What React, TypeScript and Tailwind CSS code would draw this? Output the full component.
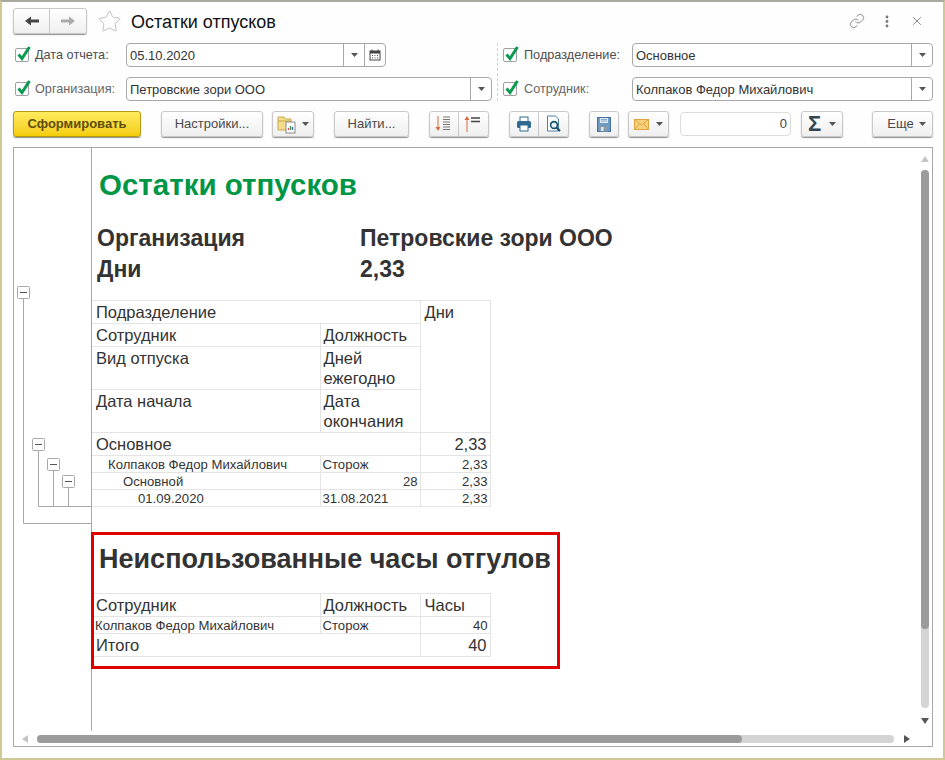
import { Link, Star, X } from "lucide-react";
import type { ReactNode } from "react";

const btn =
  "flex h-[26px] items-center justify-center rounded-[3px] border border-[#c9c9c9] bg-gradient-to-b from-white to-[#efefef] text-[13px] text-[#4a4a4a] shadow-[0_1px_1px_#8f8f8f]";
const field = "flex h-[24px] items-center rounded-[4px] border border-[#a8a8a8] bg-white text-[13px] text-[#333]";
const cell = "border border-[#e4e4e4]";
const big = "text-[16.5px] leading-[20px] pr-[3px]";
const bigTop = "text-[16.5px] leading-[20px] pr-[3px] pt-[1px] align-top";
const small = "text-[13.15px] leading-[14px] pr-[2px] pt-[1px]";

function Caret({ color = "#555" }: { color?: string }) {
  return (
    <svg width="7" height="4" viewBox="0 0 7 4">
      <path d="M0 0h7L3.5 4z" fill={color} />
    </svg>
  );
}

function Check() {
  return (
    <span className="relative block h-[14px] w-[14px] shrink-0 rounded-[2px] border border-[#a0a0a0] bg-white">
      <svg className="absolute left-[0px] top-[-4px]" width="16" height="17" viewBox="0 0 16 17">
        <path d="M2.5 9.5 L6 13.5 L13.5 2" fill="none" stroke="#0a9a50" strokeWidth="3" />
      </svg>
    </span>
  );
}

function DropBtn() {
  return (
    <span className="flex h-full w-[21px] items-center justify-center border-l border-[#a8a8a8]">
      <Caret />
    </span>
  );
}

function CheckLabel({ text, color = "#4d4d4d", gap = "gap-[6px]" }: { text: string; color?: string; gap?: string }) {
  return (
    <div className={`flex items-center ${gap}`} style={{ color }}>
      <Check />
      <span className="pt-[1px] text-[12.7px]">{text}</span>
    </div>
  );
}

function FieldText({ children }: { children: ReactNode }) {
  return <span className="flex-1 pt-[1px]">{children}</span>;
}

function Arrow({ left, color }: { left: boolean; color: string }) {
  return (
    <svg width="14" height="10" viewBox="0 0 14 10" style={{ transform: left ? undefined : "scaleX(-1)" }}>
      <path d="M0 5 L6 0.5 V3.5 H14 V6.5 H6 V9.5 Z" fill={color} />
    </svg>
  );
}

function Calendar() {
  return (
    <svg width="12" height="12" viewBox="0 0 12 12">
      <rect x="1" y="2" width="10" height="9" fill="none" stroke="#444" />
      <rect x="1" y="2" width="10" height="2.5" fill="#444" />
      <path d="M3 0.5v2M9 0.5v2" stroke="#444" />
      <path d="M3 6.5h1M5.5 6.5h1M8 6.5h1M3 8.8h1M5.5 8.8h1M8 8.8h1" stroke="#555" />
    </svg>
  );
}

function FolderIcon() {
  return (
    <svg width="20" height="20" viewBox="0 0 20 20">
      <path d="M1 3h6l1.5 2H14v11H1z" fill="#f4dc8e" stroke="#c9a94f" />
      <path d="M1 7h13" stroke="#c9a94f" />
      <rect x="9" y="8" width="9" height="11" fill="#fff" stroke="#8a8a8a" />
      <path d="M11.5 16v-2" stroke="#d9534f" strokeWidth="1.4" />
      <path d="M13.5 16v-4" stroke="#3a9a5a" strokeWidth="1.4" />
      <path d="M15.5 16v-3" stroke="#3b73b0" strokeWidth="1.4" />
    </svg>
  );
}

function SortIcon({ down }: { down: boolean }) {
  return (
    <svg width="20" height="20" viewBox="0 0 20 20">
      {down ? (
        <>
          <path d="M4 2v12" stroke="#d9693f" />
          <path d="M1.5 13h5L4 17z" fill="#d9693f" />
          <path d="M9 3h8M9 5.5h8M9 8h8M9 10.5h8M9 13h8M9 15.5h8" stroke="#777" strokeDasharray="7 1" />
        </>
      ) : (
        <>
          <path d="M3 6v12" stroke="#d9693f" />
          <path d="M0.5 6h5L3 2z" fill="#d9693f" />
          <path d="M7 4h9M7 7.5h9" stroke="#444" strokeWidth="1.3" />
        </>
      )}
    </svg>
  );
}

function PrintIcon() {
  return (
    <svg width="16" height="16" viewBox="0 0 16 16">
      <rect x="4" y="1" width="8" height="5" fill="#fff" stroke="#2f6b8f" />
      <rect x="1" y="5" width="14" height="7" rx="1.5" fill="#2f6b8f" />
      <rect x="4" y="9" width="8" height="6" fill="#fff" stroke="#2f6b8f" />
    </svg>
  );
}

function PreviewIcon() {
  return (
    <svg width="16" height="18" viewBox="0 0 16 18">
      <path d="M1.5 1h8l3 3v12h-11z" fill="#fff" stroke="#4f7f9f" />
      <circle cx="8" cy="10" r="3.4" fill="#e8f2f8" stroke="#14506f" strokeWidth="1.6" />
      <path d="M10.5 12.5L14 16" stroke="#14506f" strokeWidth="2.2" />
    </svg>
  );
}

function SaveIcon() {
  return (
    <svg width="14" height="15" viewBox="0 0 14 15">
      <rect x="0.5" y="0.5" width="13" height="14" fill="#6e9bc6" stroke="#44709c" />
      <rect x="3" y="1" width="8" height="5" fill="#dfe9f2" />
      <path d="M4 2.5h6M4 4h6" stroke="#8aa9c6" />
      <rect x="3" y="9" width="8" height="5.5" fill="#8a9aa8" />
      <rect x="4" y="10" width="2.5" height="4" fill="#dfe9f2" />
    </svg>
  );
}

function MailIcon() {
  return (
    <svg width="15" height="11" viewBox="0 0 15 11">
      <rect x="0.5" y="0.5" width="14" height="10" fill="#f6d27e" stroke="#e3a33d" />
      <path d="M0.5 0.5L7.5 6 14.5 0.5M0.5 10.5L5.5 4.5M14.5 10.5L9.5 4.5" fill="none" stroke="#e3a33d" />
    </svg>
  );
}

function MenuDots() {
  return (
    <svg width="4" height="13" viewBox="0 0 4 13">
      <circle cx="2" cy="2" r="1.4" fill="#777" />
      <circle cx="2" cy="6.5" r="1.4" fill="#777" />
      <circle cx="2" cy="11" r="1.4" fill="#777" />
    </svg>
  );
}

function TreeBox({ x, y }: { x: number; y: number }) {
  return (
    <g>
      <rect x={x + 0.5} y={y + 0.5} width="12" height="12" rx="1" fill="#fff" stroke="#a8a8a8" />
      <path d={`M${x + 3} ${y + 6.5}h7`} stroke="#555" />
    </g>
  );
}

// линии группировки слева от отчёта
function TreeGutter() {
  return (
    <svg className="absolute left-0 top-0" width="77" height="400" viewBox="0 0 77 400">
      <path
        d="M9.5 150V375.5H77M24.5 300V358.5H77M39.5 320V358.5M54.5 335V358.5"
        fill="none"
        stroke="#a8a8a8"
      />
      <TreeBox x={3} y={138} />
      <TreeBox x={18} y={290} />
      <TreeBox x={33} y={310} />
      <TreeBox x={48} y={327} />
    </svg>
  );
}

function Toolbar() {
  return (
    <div className="mt-[10px] flex h-[26px] items-center">
      <button className="flex h-[26px] w-[128px] items-center justify-center rounded-[3px] border border-[#b59a14] bg-gradient-to-b from-[#ffec5c] to-[#f5cd00] text-[13px] font-bold text-[#5f4e0a] shadow-[0_1px_1px_#8f8f8f]">
        Сформировать
      </button>
      <button className={`${btn} ml-[20px] w-[102px]`}>Настройки...</button>
      <button className={`${btn} ml-[9px] w-[42px] gap-[5px]`}>
        <FolderIcon />
        <Caret />
      </button>
      <button className={`${btn} ml-[20px] w-[75px]`}>Найти...</button>
      <div className={`${btn} ml-[20px] w-[60px]`}>
        <span className="flex h-full w-[30px] items-center justify-center border-r border-[#c9c9c9]">
          <SortIcon down />
        </span>
        <span className="flex h-full w-[30px] items-center justify-center">
          <SortIcon down={false} />
        </span>
      </div>
      <div className={`${btn} ml-[20px] w-[60px]`}>
        <span className="flex h-full w-[30px] items-center justify-center border-r border-[#c9c9c9]">
          <PrintIcon />
        </span>
        <span className="flex h-full w-[30px] items-center justify-center">
          <PreviewIcon />
        </span>
      </div>
      <button className={`${btn} ml-[20px] w-[30px]`}>
        <SaveIcon />
      </button>
      <button className={`${btn} ml-[9px] w-[41px] gap-[7px]`}>
        <MailIcon />
        <Caret />
      </button>
      <div className="ml-[11px] flex h-[24px] w-[111px] items-center justify-end rounded-[4px] border border-[#dcdcdc] bg-white pr-[3px] text-[13px] text-[#444]">
        0
      </div>
      <button className={`${btn} ml-[10px] w-[42px] gap-[8px]`}>
        <span className="text-[22px] font-bold leading-none text-[#34454f]">Σ</span>
        <Caret />
      </button>
      <button className={`${btn} ml-auto w-[61px] gap-[5px] pl-[8px]`}>
        Еще
        <Caret />
      </button>
    </div>
  );
}

function Row({ h, children }: { h: string; children: ReactNode }) {
  return <tr className={h}>{children}</tr>;
}

function Scrollbars() {
  return (
    <>
      <svg className="absolute left-[907px] top-[8px]" width="8" height="6" viewBox="0 0 8 6">
        <path d="M0 6h8L4 0z" fill="#c4c4c4" />
      </svg>
      <div className="absolute left-[907px] top-[22px] h-[538px] w-[8px] rounded-full bg-[#d4d4d4]">
        <div className="h-[459px] w-full rounded-full bg-[#9b9b9b]" />
      </div>
      <svg className="absolute left-[907px] top-[570px]" width="8" height="6" viewBox="0 0 8 6">
        <path d="M0 0h8L4 6z" fill="#555" />
      </svg>
      <svg className="absolute left-[8px] top-[587px]" width="6" height="8" viewBox="0 0 6 8">
        <path d="M6 0v8L0 4z" fill="#c4c4c4" />
      </svg>
      <div className="absolute left-[23px] top-[587px] h-[8px] w-[857px] rounded-full bg-[#d4d4d4]">
        <div className="h-full w-[705px] rounded-full bg-[#9b9b9b]" />
      </div>
      <svg className="absolute left-[890px] top-[587px]" width="6" height="8" viewBox="0 0 6 8">
        <path d="M0 0v8l6-4z" fill="#555" />
      </svg>
    </>
  );
}

function Report() {
  return (
    <div className="relative mt-[10px] flex h-[600px] overflow-hidden border border-[#a8a8a8] bg-white text-[#333]">
      <div className="relative h-[583px] w-[78px] shrink-0 border-r border-[#a8a8a8]">
        <TreeGutter />
      </div>
      <div className="flex-1">
        <div className="ml-[7px] mt-[19px] h-[36px] text-[29.5px] font-bold leading-[36px] text-[#009646]">
          Остатки отпусков
        </div>
        <div className="ml-[5px] mt-[20px] grid grid-cols-[263px_1fr] text-[23px] font-bold leading-[31px]">
          <div>Организация</div>
          <div>Петровские зори ООО</div>
          <div>Дни</div>
          <div>2,33</div>
        </div>
        <table className="mt-[15px] w-[398px] table-fixed border-collapse">
          <colgroup>
            <col className="w-[228px]" />
            <col className="w-[100px]" />
            <col className="w-[70px]" />
          </colgroup>
          <tbody>
            <Row h="h-[23px]">
              <td colSpan={2} className={`${cell} ${big} border-l-0 pl-[4px]`}>Подразделение</td>
              <td rowSpan={4} className={`${cell} ${bigTop} pl-[4px]`}>Дни</td>
            </Row>
            <Row h="h-[23px]">
              <td className={`${cell} ${big} border-l-0 pl-[4px]`}>Сотрудник</td>
              <td className={`${cell} ${big} pl-[3px]`}>Должность</td>
            </Row>
            <Row h="h-[43px]">
              <td className={`${cell} ${bigTop} border-l-0 pl-[4px]`}>Вид отпуска</td>
              <td className={`${cell} ${bigTop} pl-[3px]`}>Дней ежегодно</td>
            </Row>
            <Row h="h-[43px]">
              <td className={`${cell} ${bigTop} border-l-0 pl-[4px]`}>Дата начала</td>
              <td className={`${cell} ${bigTop} pl-[3px]`}>Дата окончания</td>
            </Row>
            <Row h="h-[23px]">
              <td colSpan={2} className={`${cell} ${big} border-l-0 pl-[4px]`}>Основное</td>
              <td className={`${cell} ${big} text-right`}>2,33</td>
            </Row>
            <Row h="h-[17px]">
              <td className={`${cell} ${small} border-l-0 pl-[16px] whitespace-nowrap`}>Колпаков Федор Михайлович</td>
              <td className={`${cell} ${small} pl-[2px]`}>Сторож</td>
              <td className={`${cell} ${small} text-right`}>2,33</td>
            </Row>
            <Row h="h-[17px]">
              <td className={`${cell} ${small} border-l-0 pl-[31px]`}>Основной</td>
              <td className={`${cell} ${small} text-right`}>28</td>
              <td className={`${cell} ${small} text-right`}>2,33</td>
            </Row>
            <Row h="h-[17px]">
              <td className={`${cell} ${small} border-l-0 pl-[46px]`}>01.09.2020</td>
              <td className={`${cell} ${small} pl-[2px]`}>31.08.2021</td>
              <td className={`${cell} ${small} text-right`}>2,33</td>
            </Row>
          </tbody>
        </table>
        <div className="relative mt-[37px]">
          <div className="ml-[7px] h-[30px] text-[27px] font-bold leading-[30px] whitespace-nowrap">Неиспользованные часы отгулов</div>
          <table className="mt-[19px] w-[398px] table-fixed border-collapse">
            <colgroup>
              <col className="w-[228px]" />
              <col className="w-[100px]" />
              <col className="w-[70px]" />
            </colgroup>
            <tbody>
              <Row h="h-[23px]">
                <td className={`${cell} ${big} border-l-0 pl-[4px]`}>Сотрудник</td>
                <td className={`${cell} ${big} pl-[3px]`}>Должность</td>
                <td className={`${cell} ${big} pl-[4px]`}>Часы</td>
              </Row>
              <Row h="h-[17px]">
                <td className={`${cell} ${small} border-l-0 pl-[3px] whitespace-nowrap`}>Колпаков Федор Михайлович</td>
                <td className={`${cell} ${small} pl-[2px]`}>Сторож</td>
                <td className={`${cell} ${small} text-right`}>40</td>
              </Row>
              <Row h="h-[23px]">
                <td colSpan={2} className={`${cell} ${big} border-l-0 pl-[4px]`}>Итого</td>
                <td className={`${cell} ${big} text-right`}>40</td>
              </Row>
            </tbody>
          </table>
          <div className="absolute left-[-1px] top-[-12px] h-[137px] w-[469px] border-[3px] border-[#e00000]" />
        </div>
      </div>
      <Scrollbars />
    </div>
  );
}

export default function App() {
  return (
    <div className="box-border h-[760px] w-[945px] border-2 border-[#cfca93] border-t-[#a9a9a2] bg-[#fefefe] pl-[11px] pr-[10px] pt-[7px] font-['Liberation_Sans',Arial,sans-serif]">
      <div className="flex h-[24px] items-center">
        <div className={`${btn} h-[24px] w-[74px]`}>
          <span className="flex h-full w-[37px] items-center justify-center border-r border-[#c9c9c9]">
            <Arrow left color="#444" />
          </span>
          <span className="flex h-full w-[37px] items-center justify-center">
            <Arrow left={false} color="#aaa" />
          </span>
        </div>
        <Star className="ml-[10px]" size={25} strokeWidth={0.8} color="#b5b5b5" />
        <h1 className="ml-[9px] pt-[1px] text-[18px] leading-[24px] text-[#111]">Остатки отпусков</h1>
        <div className="ml-auto mr-[9px] flex items-center">
          <Link size={16} strokeWidth={1.1} color="#666" />
          <span className="ml-[20px]"><MenuDots /></span>
          <X className="ml-[21px]" size={14} strokeWidth={1.3} color="#666" />
        </div>
      </div>

      <div className="mt-[10px] flex h-[58px]">
        <div className="grid w-[479px] grid-cols-[111px_1fr] grid-rows-[24px_24px] gap-y-[10px] pl-[2px]">
          <CheckLabel text="Дата отчета:" />
          <div className={`${field} w-[260px] pl-[3px]`}>
            <FieldText>05.10.2020</FieldText>
            <DropBtn />
            <span className="flex h-full w-[21px] items-center justify-center border-l border-[#a8a8a8]">
              <Calendar />
            </span>
          </div>
          <CheckLabel text="Организация:" color="#666" />
          <div className={`${field} pl-[3px]`}>
            <FieldText>Петровские зори ООО</FieldText>
            <DropBtn />
          </div>
        </div>
        <div className="ml-[5px] h-full w-0 border-l border-dashed border-[#d5d5d5]" />
        <div className="ml-[5px] grid flex-1 grid-cols-[129px_1fr] grid-rows-[24px_24px] gap-y-[10px]">
          <CheckLabel text="Подразделение:" gap="gap-[7px]" />
          <div className={`${field} pl-[3px]`}>
            <FieldText>Основное</FieldText>
            <DropBtn />
          </div>
          <CheckLabel text="Сотрудник:" color="#666" gap="gap-[7px]" />
          <div className={`${field} pl-[3px]`}>
            <FieldText>Колпаков Федор Михайлович</FieldText>
            <DropBtn />
          </div>
        </div>
      </div>

      <Toolbar />
      <Report />
    </div>
  );
}
